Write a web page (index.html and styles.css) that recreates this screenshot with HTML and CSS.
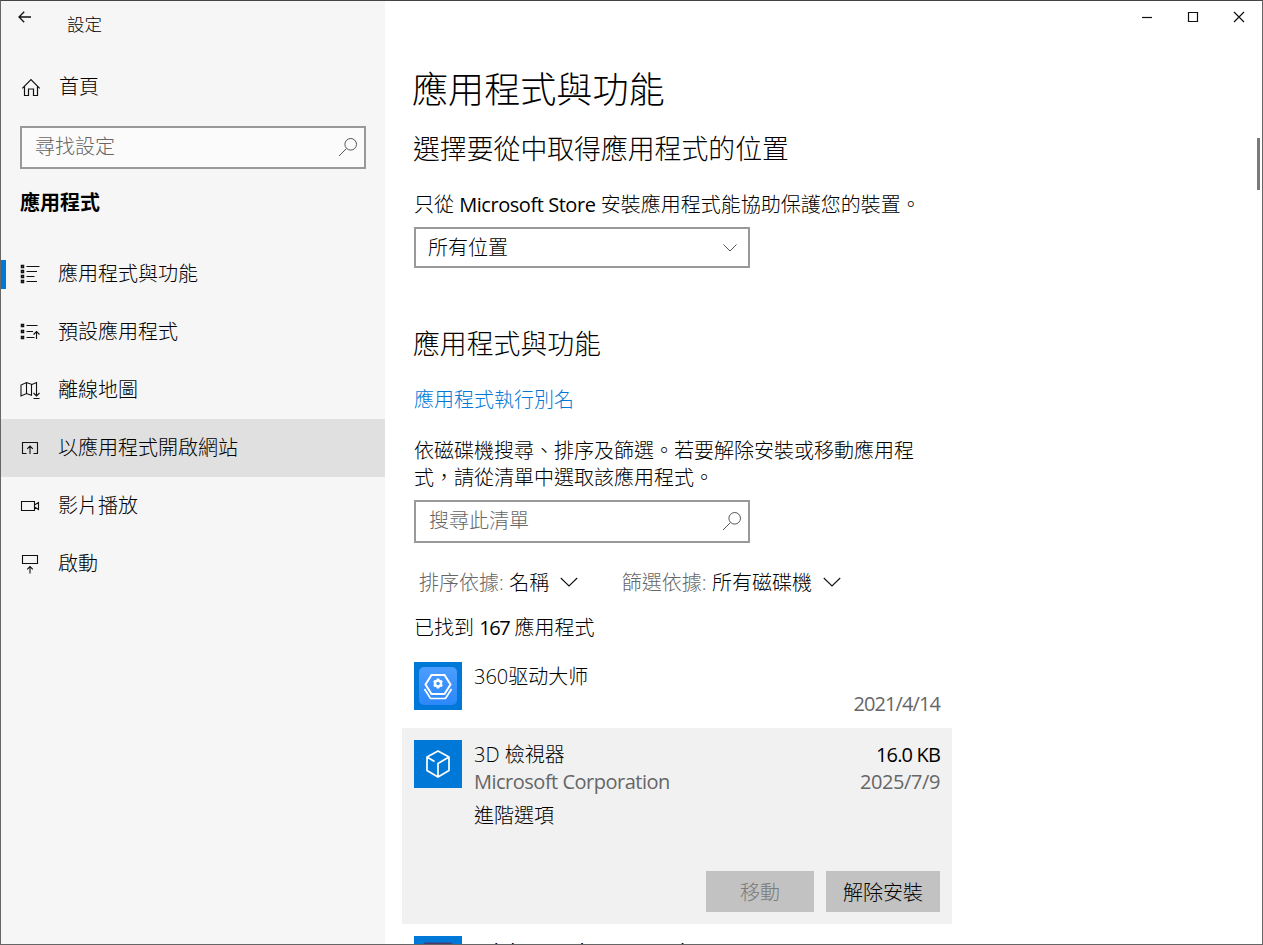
FILE: index.html
```html
<!DOCTYPE html>
<html lang="zh-Hant-TW">
<head>
<meta charset="utf-8">
<title>設定</title>
<link rel="stylesheet" href="styles.css">
</head>
<body>
<div class="window">
  <aside class="sidebar">
    <header class="titlebar">
      <svg class="back" width="14" height="12" viewBox="0 0 14 12"><path d="M1 6H13M6.2 .8L1 6l5.2 5.2"/></svg>
      <span class="app-title">設定</span>
    </header>
    <a class="home">
      <svg width="20" height="20" viewBox="0 0 20 20"><path d="M1.300 10.300L10 1.600l8.700 8.700M3.500 8.400V17.500H7.500V11H12.500V17.500H16.500V8.400"/></svg>
      <span>首頁</span>
    </a>
    <div class="field side-search">
      <span>尋找設定</span>
      <svg width="20" height="20" viewBox="0 0 20 20"><circle cx="12.700" cy="7.300" r="5.800"/><path d="M8.500 11.500L1 19"/></svg>
    </div>
    <h2 class="side-heading">應用程式</h2>
    <nav class="nav">
      <a class="nav-item active">
        <svg width="20" height="20" viewBox="0 0 20 20"><path class="bullets" d="M1.500 1.500h2v2h-2zM1.500 6.500h2v2h-2zM1.500 11.500h2v2h-2zM1.500 16.500h2v2h-2z"/><path d="M6.500 2.500H19.500M6.500 7.500H17M6.500 12.500H14.500M6.500 17.500H17"/></svg>
        <span>應用程式與功能</span>
      </a>
      <a class="nav-item">
        <svg width="20" height="20" viewBox="0 0 20 20"><path class="bullets" d="M1.500 2.500h2v2h-2zM1.500 8.500h2v2h-2zM1.500 14.500h2v2h-2z"/><path d="M6.500 3.500H17.500M6.500 9.500H13M6.500 15.500H14.500M16.500 17V9.500M13.500 12.500l3-3 3 3"/></svg>
        <span>預設應用程式</span>
      </a>
      <a class="nav-item">
        <svg width="20" height="20" viewBox="0 0 20 20"><path d="M12 15.500L6.500 13.500 1 16V5l5.500-2.500 5.500 2 4.500-2V14.500M6.500 2.500V13.500M11.500 4.500V15.500M16.500 8V15.500M13.500 13l3 3 3-3M13.500 18.500H19.500"/></svg>
        <span>離線地圖</span>
      </a>
      <a class="nav-item hover">
        <svg width="20" height="20" viewBox="0 0 20 20"><path d="M6.500 15.500H2.500V4.500H17.500V15.500H13.500M10 16V8M7.200 10.800L10 8l2.800 2.800"/></svg>
        <span>以應用程式開啟網站</span>
      </a>
      <a class="nav-item">
        <svg width="20" height="20" viewBox="0 0 20 20"><path d="M1.500 5.500H14.500V14.500H1.500zM14.500 9l4-2.500v7l-4-2.500"/></svg>
        <span>影片播放</span>
      </a>
      <a class="nav-item">
        <svg width="20" height="20" viewBox="0 0 20 20"><path d="M2.500 1.500H17.500V9.500H2.500zM10 19.500V12.500M7.200 15.300L10 12.500l2.800 2.800"/></svg>
        <span>啟動</span>
      </a>
    </nav>
  </aside>

  <main class="main">
    <div class="content">
      <h1 class="page-title">應用程式與功能</h1>
      <h2 class="section-title">選擇要從中取得應用程式的位置</h2>
      <p class="source-note">只從 <span class="latin store">Microsoft Store</span> 安裝應用程式能協助保護您的裝置。</p>
      <div class="field source-select">
        <span>所有位置</span>
        <svg width="16" height="16" viewBox="0 0 16 16"><path d="M1.500 4.500L8 11l6.500-6.500"/></svg>
      </div>
      <h2 class="section-title features">應用程式與功能</h2>
      <a class="alias-link">應用程式執行別名</a>
      <p class="help">依磁碟機搜尋、排序及篩選。若要解除安裝或移動應用程<br>式，請從清單中選取該應用程式。</p>
      <div class="field list-search">
        <span>搜尋此清單</span>
        <svg width="20" height="20" viewBox="0 0 20 20"><circle cx="12.700" cy="7.300" r="5.800"/><path d="M8.500 11.500L1 19"/></svg>
      </div>
      <div class="filters">
        <div class="filter"><span class="muted">排序依據:</span><span>名稱</span><svg width="18" height="18" viewBox="0 0 18 18"><path d="M.8 4L9 12l8.200-8"/></svg></div>
        <div class="filter"><span class="muted">篩選依據:</span><span>所有磁碟機</span><svg width="18" height="18" viewBox="0 0 18 18"><path d="M.8 4L9 12l8.200-8"/></svg></div>
      </div>
      <p class="count">已找到 <span class="latin number">167</span> 應用程式</p>

      <article class="app">
        <svg class="app-icon" width="48" height="48" viewBox="0 0 48 48">
          <defs><linearGradient id="tile" x2="0" y2="1"><stop stop-color="#4c9dff"/><stop offset="1" stop-color="#2b87fa"/></linearGradient></defs>
          <rect width="48" height="48" fill="#0078d7"/>
          <rect x="5" y="5" width="38" height="38" rx="5" fill="url(#tile)"/>
          <g fill="none" stroke="#fff">
            <path stroke-width="2" d="M17.500 13h13l6 9.500-6 9.500h-13l-6-9.500z"/>
            <path stroke-width="1.700" d="M10.500 27l6 9.500h15l6-9.500"/>
            <circle cx="24" cy="21.500" r="3" stroke-width="2.400"/>
            <path stroke-width="2.400" d="M24 16.500v2M24 24.500v2M19.700 19l1.700 1M26.600 23l1.700 1M28.300 19l-1.700 1M21.400 23l-1.700 1"/>
          </g>
        </svg>
        <div class="app-text"><p class="app-name">360驱动大师</p></div>
        <div class="app-meta"><p>&nbsp;</p><p class="muted date older">2021/4/14</p></div>
      </article>

      <article class="app selected">
        <div class="app-row">
          <svg class="app-icon" width="48" height="48" viewBox="0 0 48 48">
            <rect width="48" height="48" fill="#0078d7"/>
            <path fill="none" stroke="#fff" stroke-width="1.700" stroke-linejoin="round" d="M24 11l11 6v13.500L24 37l-11-6.500V17zM24 37V23.500L35 17M13 17l7.500 4.500"/>
          </svg>
          <div class="app-text">
            <p class="app-name">3D 檢視器</p>
            <p class="muted latin publisher">Microsoft Corporation</p>
            <a class="advanced">進階選項</a>
          </div>
          <div class="app-meta"><p class="latin size">16.0 KB</p><p class="muted date">2025/7/9</p></div>
        </div>
        <div class="actions">
          <button class="btn move" disabled>移動</button>
          <button class="btn uninstall">解除安裝</button>
        </div>
      </article>

      <article class="app last">
        <svg class="app-icon" width="48" height="48" viewBox="0 0 48 48"><rect width="48" height="48" fill="#0078d7"/><rect x="9" y="6.500" width="30" height="32" rx="3" fill="#493a72"/></svg>
        <div class="app-text"><p class="app-name latin adobe">Adobe Acrobat DC (64-bit)</p></div>
      </article>
    </div>
    <div class="window-buttons">
      <svg width="12" height="12" viewBox="0 0 12 12"><path d="M1 6.500H11"/></svg>
      <svg width="12" height="12" viewBox="0 0 12 12"><path d="M1.500 1.500h9v9h-9z"/></svg>
      <svg width="12" height="12" viewBox="0 0 12 12"><path d="M1 1l10 10M11 1L1 11"/></svg>
    </div>
    <div class="scroll-thumb"></div>
  </main>
</div>
</body>
</html>
```

FILE: styles.css
```css
* { box-sizing: border-box; }
body {
  margin: 0;
  font-family: "Open Sans", "Noto Sans CJK TC", sans-serif;
  font-size: 20px;
  font-weight: 300;
  line-height: 28px;
  color: #000;
}
h1, h2, p { margin: 0; font-weight: 300; }
svg { display: block; flex: none; fill: none; stroke: #111; stroke-width: 1.2; }
.window {
  display: flex;
  width: 1263px;
  height: 945px;
  overflow: hidden;
  border: 1px solid #666;
  border-top-color: #444;
  background: #fff;
}
.latin { font-weight: 400; }
.muted { color: #666; }

.sidebar { width: 384px; flex: none; background: #f6f6f6; }
.titlebar { display: flex; height: 71px; padding-left: 17px; }
.back { margin-top: 10px; stroke-width: 1.3; }
.app-title { margin: 9px 0 0 35px; font-size: 17.500px; }
.home { display: flex; height: 54px; padding: 0 0 0 20px; gap: 18px; }
.home svg { margin-top: 6px; }
.home span { margin-top: 1px; }
.field {
  display: flex;
  align-items: center;
  justify-content: space-between;
  border: 2px solid #999;
  background: #fff;
}
.field svg { stroke: #555; stroke-width: 1; }
.side-search { width: 346px; height: 43px; margin-left: 19px; padding: 0 6px 2px 13px; background: #fbfbfb; color: #666; }
.side-heading { margin: 20px 0 28px 19px; font-size: 20px; font-weight: 600; line-height: 28px; }
.nav-item { display: flex; align-items: center; gap: 18px; height: 58px; padding-left: 19px; position: relative; }
.nav-item svg { stroke-width: 1.1; }
.nav-item .bullets { stroke-width: 1.5; }
.nav-item.hover { background: #e0e0e0; }
.nav-item.active::before { content: ""; position: absolute; left: 0; top: 15px; width: 5px; height: 29px; background: #0078d7; }

.main { flex: 1; position: relative; }
.content { width: 567px; padding: 63px 0 0 17px; }
.page-title { padding-left: 10px; font-size: 36.100px; line-height: 50px; }
.section-title { margin-top: 16px; padding-left: 11px; font-size: 26.850px; line-height: 38px; }
.source-note { margin-top: 23px; padding-left: 12px; white-space: nowrap; }
.store { letter-spacing: -0.45px; }
.source-select { width: 336px; height: 41px; margin: 8px 0 0 12px; padding: 0 10px 0 12px; }
.features { margin-top: 57px; }
.alias-link { display: block; margin-top: 23px; padding-left: 12px; color: #0078d7; }
.help { margin-top: 23px; padding-left: 12px; line-height: 27px; white-space: nowrap; }
.list-search { width: 336px; height: 43px; margin: 9px 0 0 12px; padding: 0 6px 2px 13px; color: #666; }
.filters { display: flex; gap: 44px; margin-top: 26px; padding-left: 17px; }
.filter { display: flex; align-items: center; gap: 5.500px; }
.filter svg { margin-left: 5px; stroke-width: 1.1; }
.count { margin-top: 17px; padding-left: 12px; }
.number { letter-spacing: -1.4px; }

.app { display: flex; width: 550px; height: 66px; padding: 0 12px; margin-top: 20px; }
.app-icon { stroke: none; }
.app-text { flex: 1; padding: 1px 0 0 12px; line-height: 27px; }
.app-meta { padding-top: 1px; line-height: 27px; text-align: right; }
.date { font-weight: 400; letter-spacing: -0.4px; }
.older { letter-spacing: -0.9px; }
.publisher { letter-spacing: -0.5px; }
.size { letter-spacing: -0.85px; }
.advanced { display: block; margin-top: 7px; }
.app.selected { display: block; height: 196px; margin-top: 0; padding-top: 12px; background: #f1f1f1; }
.app-row { display: flex; height: 131px; }
.actions { display: flex; justify-content: flex-end; gap: 12px; }
.btn { height: 41px; padding: 2px 0 0; border: 0; background: #c2c2c2; font: inherit; color: #000; }
.btn.move { width: 108px; color: #7a7a7a; }
.btn.uninstall { width: 114px; }
.app.last { margin-top: 12px; }
.adobe { letter-spacing: -0.25px; }

.window-buttons { position: absolute; top: 10px; right: 17px; display: flex; gap: 34px; }
.scroll-thumb { position: absolute; top: 137px; right: 2px; width: 3px; height: 52px; background: #7a7a7a; }
```
